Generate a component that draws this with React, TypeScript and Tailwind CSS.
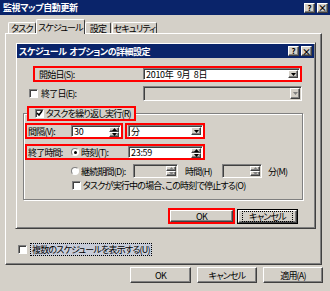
import React from 'react';

const FONT = "font-['Noto_Sans_CJK_JP','Noto_Sans_CJK_SC',sans-serif] [font-feature-settings:'palt']";

const raised =
  'border border-t-white border-l-white border-r-[#404040] border-b-[#404040] shadow-[inset_-1px_-1px_0_#808080] bg-[#d4d0c8]';
const sunken =
  'border border-t-[#808080] border-l-[#808080] border-r-white border-b-white shadow-[inset_1px_1px_0_#404040]';

function Tri({ up = false, disabled = false }: { up?: boolean; disabled?: boolean }) {
  return (
    <svg width="5" height="3" viewBox="0 0 5 3">
      <path d={up ? 'M2.5 0 L5 3 L0 3 Z' : 'M0 0 L5 0 L2.5 3 Z'} fill={disabled ? '#808080' : '#000'} />
    </svg>
  );
}

function DropArrow({ disabled = false }: { disabled?: boolean }) {
  return (
    <div className={`${raised} w-[10px] h-full flex items-center justify-center shrink-0`}>
      <Tri disabled={disabled} />
    </div>
  );
}

function Spin({ disabled = false }: { disabled?: boolean }) {
  return (
    <div className="w-[10px] h-full flex flex-col shrink-0">
      <div className={`${raised} flex-1 flex items-center justify-center`}>
        <Tri up disabled={disabled} />
      </div>
      <div className={`${raised} flex-1 flex items-center justify-center`}>
        <Tri disabled={disabled} />
      </div>
    </div>
  );
}

function Field({
  w,
  h,
  text,
  disabled = false,
  kind,
}: {
  w: number;
  h: number;
  text?: string;
  disabled?: boolean;
  kind: 'drop' | 'spin';
}) {
  return (
    <div
      className={`${sunken} flex items-stretch shrink-0 p-[1px] ${disabled ? 'bg-[#d4d0c8]' : 'bg-white'}`}
      style={{ width: w, height: h }}
    >
      <div className="flex-1 flex items-center pl-[1px] text-black whitespace-pre tracking-[-0.3px]">{text}</div>
      {kind === 'drop' ? <DropArrow disabled={disabled} /> : <Spin disabled={disabled} />}
    </div>
  );
}

function Check({ checked = false }: { checked?: boolean }) {
  return (
    <div className={`${sunken} w-[9px] h-[9px] bg-white flex items-center justify-center shrink-0`}>
      {checked && (
        <svg width="7" height="7" viewBox="0 0 7 7">
          <path d="M1 3 L3 5 L6 1" stroke="#000" strokeWidth="1.6" fill="none" />
        </svg>
      )}
    </div>
  );
}

function Radio({ checked = false }: { checked?: boolean }) {
  return (
    <div className="w-[8px] h-[8px] rounded-full border border-t-[#808080] border-l-[#808080] border-r-white border-b-white bg-white flex items-center justify-center shrink-0">
      {checked && <div className="w-[3px] h-[3px] rounded-full bg-black" />}
    </div>
  );
}

function TitleButtons() {
  return (
    <div className="flex gap-[2px] mr-[2px] tracking-normal">
      <div className={`${raised} w-[11px] h-[10px] flex items-center justify-center text-[8px] font-bold text-black`}>?</div>
      <div className={`${raised} w-[11px] h-[10px] flex items-center justify-center text-[9px] font-bold text-black`}>×</div>
    </div>
  );
}

function Tab({ label, active = false, w }: { label: string; active?: boolean; w: number }) {
  return (
    <div
      className={`border-t border-l border-t-white border-l-white border-r border-r-[#404040] rounded-t-[2px] flex items-center justify-center bg-[#d4d0c8] whitespace-nowrap shrink-0 ${
        active ? 'h-[15px] -mx-[1px] relative z-10 -mb-[1px]' : 'h-[11px]'
      }`}
      style={{ width: w }}
    >
      {label}
    </div>
  );
}

function PushButton({ label, w, def = false }: { label: string; w: number; def?: boolean }) {
  return (
    <div
      className={`${def ? 'border border-black' : ''} shrink-0`}
      style={{ width: w, height: def ? 15 : 16 }}
    >
      <div className={`${raised} w-full h-full flex items-center justify-center whitespace-nowrap`}>
        {def ? (
          <span className="border border-dotted border-black px-[6px] leading-[9px]">{label}</span>
        ) : (
          label
        )}
      </div>
    </div>
  );
}

export default function App() {
  return (
    <div className={`relative w-[330px] h-[291px] overflow-hidden bg-[#d4d0c8] text-black text-[9px] leading-none tracking-[-0.8px] ${FONT}`}>
      {/* Outer window */}
      <div className="h-[15px] bg-[#0a246a] flex items-center justify-between pl-[3px]">
        <span className="text-white font-bold text-[9px] tracking-[-0.4px]">監視マップ自動更新</span>
        <TitleButtons />
      </div>

      <div className="mt-[4px] pl-[8px] h-[14px] flex items-end gap-[1px]">
        <Tab label="タスク" w={28} />
        <Tab label="スケジュール" w={49} active />
        <Tab label="設定" w={26} />
        <Tab label="セキュリティ" w={45} />
      </div>

      <div className="ml-[5px] w-[317px] h-[232px] border border-t-white border-l-white border-r-[#404040] border-b-[#404040] shadow-[inset_-1px_-1px_0_#808080] flex flex-col justify-end pb-[8px]">
        <div className="flex items-center ml-[12px] gap-[3px]">
          <Check />
          <span className="border border-dotted border-black bg-[#c8ccd8] px-[1px] py-[1px]">複数のスケジュールを表示する(U)</span>
        </div>
      </div>

      <div className="mt-[2px] ml-[130px] flex gap-[6px]">
        <PushButton label="OK" w={61} />
        <PushButton label="キャンセル" w={60} />
        <PushButton label="適用(A)" w={60} />
      </div>

      {/* Inner dialog */}
      <div className="absolute left-[15px] top-[42px] w-[301px] h-[187px] bg-[#d4d0c8] border border-t-[#d4d0c8] border-l-[#d4d0c8] border-r-[#404040] border-b-[#404040] shadow-[inset_1px_1px_0_#ffffff,inset_-1px_-1px_0_#808080] p-[1px]">
        <div className="h-[14px] bg-[#0a246a] flex items-center justify-between pl-[2px]">
          <span className="text-white font-bold text-[9px] tracking-[-0.5px] whitespace-pre">スケジュール  オプションの詳細設定</span>
          <TitleButtons />
        </div>

        {/* Start date */}
        <div className="mt-[8px] ml-[16px] w-[269px] h-[16px] border-2 border-[#ff0000] flex items-center">
          <span className="flex-1 pl-[4px]">開始日(S):</span>
          <Field w={157} h={12} text="2010年  9月  8日" kind="drop" />
        </div>

        {/* End date */}
        <div className="mt-[4px] ml-[12px] w-[273px] h-[15px] flex items-center">
          <Check />
          <span className="ml-[3px] flex-1">終了日(E):</span>
          <Field w={159} h={15} disabled kind="drop" />
        </div>

        {/* Repeat group */}
        <fieldset className="mt-[5px] ml-[6px] w-[280px] h-[94px] border border-[#808080] shadow-[1px_1px_0_#ffffff,inset_1px_1px_0_#ffffff]">
          <legend className="ml-[3px] h-[15px] border-2 border-[#ff0000] bg-[#d4d0c8] flex items-center pl-[6px] pr-[3px] gap-[2px]">
            <Check checked />
            <span>タスクを繰り返し実行(R)</span>
          </legend>

          <div className="mt-[2px] ml-[1px] flex gap-[2px]">
            <div className="w-[98px] h-[16px] border-2 border-[#ff0000] flex items-center pl-[1px]">
              <span className="flex-1">間隔(V):</span>
              <Field w={50} h={12} text="30" kind="spin" />
            </div>
            <div className="w-[80px] h-[16px] border-2 border-[#ff0000] flex items-center pl-[1px]">
              <Field w={75} h={12} text="分" kind="drop" />
            </div>
          </div>

          <div className="mt-[5px] ml-[1px] w-[180px] h-[16px] border-2 border-[#ff0000] flex items-center pl-[1px]">
            <span className="w-[43px]">終了時間:</span>
            <Radio checked />
            <span className="ml-[2px] w-[47px]">時刻(T):</span>
            <Field w={75} h={12} text="23:59" kind="spin" />
          </div>

          <div className="mt-[4px] ml-[47px] h-[14px] flex items-center">
            <Radio />
            <span className="ml-[2px] w-[52px]">継続期間(D):</span>
            <Field w={45} h={14} disabled kind="spin" />
            <span className="ml-[7px] w-[37px]">時間(H)</span>
            <Field w={40} h={14} disabled kind="spin" />
            <span className="ml-[6px]">分(M)</span>
          </div>

          <div className="mt-[3px] ml-[48px] flex items-center gap-[2px]">
            <Check />
            <span>タスクが実行中の場合、この時刻で停止する(O)</span>
          </div>
        </fieldset>

        {/* Dialog buttons */}
        <div className="mt-[8px] ml-[151px] flex items-start gap-[2px]">
          <div className="w-[67px] h-[16px] border-2 border-[#ff0000]">
            <div className={`${raised} w-full h-full flex items-center justify-center`}>OK</div>
          </div>
          <div className="mt-[1px]">
            <PushButton label="キャンセル" w={61} def />
          </div>
        </div>
      </div>
    </div>
  );
}
